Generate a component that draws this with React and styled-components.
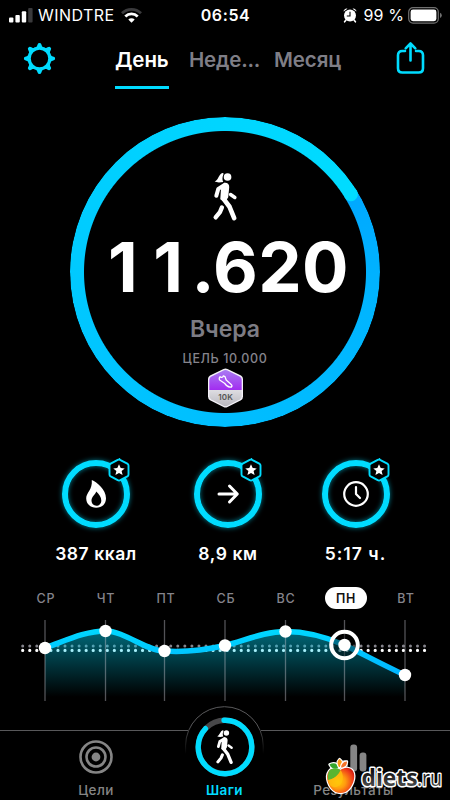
import React from "react";
import styled, { createGlobalStyle } from "styled-components";

const GlobalStyle = createGlobalStyle`
  * { box-sizing: border-box; }
  body {
    margin: 0;
    background: #000;
    overflow: hidden;
  }
  svg { display: block; overflow: visible; }
`;

const Screen = styled.div`
  display: flex;
  flex-direction: column;
  width: 450px;
  height: 800px;
  background: #000;
  color: #fff;
  font-family: Inter, "Liberation Sans", sans-serif;
  white-space: nowrap;
  overflow: hidden;
`;

const StatusBar = styled.div`
  display: grid;
  grid-template-columns: 1fr auto 1fr;
  align-items: center;
  height: 30px;
  padding: 0 8px 0 9px;
`;

const StatusSide = styled.div`
  display: flex;
  align-items: center;
  justify-content: ${({ $end }) => ($end ? "flex-end" : "flex-start")};
  height: 29px;
`;

const StatusText = styled.span`
  font-size: 16px;
  line-height: 29px;
  font-weight: ${({ $bold }) => ($bold ? 600 : 400)};
  letter-spacing: ${({ $track }) => $track || 0}px;
  margin: ${({ $margin }) => $margin || 0};
`;

const Header = styled.div`
  display: flex;
  align-items: flex-start;
  height: 70px;
  padding: 12px 25px 0 23px;
`;

const Tabs = styled.div`
  display: flex;
  flex: 1;
  padding-left: 59px;
  gap: 20px;
`;

const Tab = styled.div`
  width: ${({ $width }) => $width}px;
  height: 47px;
  font-size: 20.5px;
  line-height: 36px;
  font-weight: 600;
  letter-spacing: ${({ $track }) => $track}px;
  color: ${({ $active }) => ($active ? "#fff" : "#7f7e86")};
  border-bottom: 3px solid ${({ $active }) => ($active ? "#00dcff" : "transparent")};
`;

const Dial = styled.div`
  display: grid;
  place-items: start center;
  width: 310px;
  height: 310px;
  margin: 17px 0 0 70px;
  flex: none;
  > * { grid-area: 1 / 1; }
`;

const DialRing = styled.div`
  width: 310px;
  height: 310px;
  border-radius: 50%;
  background: conic-gradient(from 58.3deg, #00a8ff 0deg, #00b4ff 40deg, #00beff 120deg, #00c8ff 200deg, #00d4ff 290deg, #00dcff 360deg);
  mask: radial-gradient(circle, transparent 140.5px, #000 141.5px);
`;

const DialCap = styled.svg`
  z-index: 1;
`;

const DialContent = styled.div`
  display: flex;
  flex-direction: column;
  align-items: center;
  padding-top: 55px;
`;

const Steps = styled.div`
  margin-top: 4px;
  height: 84px;
  padding-left: 7px;
  font-size: 69px;
  line-height: 84px;
  font-weight: 700;
  letter-spacing: 0.4px;
`;

const Digit = styled.span`
  letter-spacing: ${({ $track }) => $track}px;
`;

const When = styled.div`
  height: 30px;
  margin-top: 5px;
  font-size: 23px;
  line-height: 30px;
  font-weight: 600;
  color: #7d7c84;
`;

const Goal = styled.div`
  height: 18px;
  margin: 6px 0 0;
  font-size: 12.5px;
  line-height: 18px;
  font-weight: 500;
  letter-spacing: 0.6px;
  color: #85848c;
`;

const Stats = styled.div`
  display: grid;
  grid-template-columns: 132px 132px 123px;
  margin-top: 33px;
  padding-left: 30px;
  height: 114px;
`;

const Stat = styled.div`
  display: flex;
  flex-direction: column;
  align-items: center;
`;

const StatRing = styled.div`
  position: relative;
  display: flex;
  align-items: center;
  justify-content: center;
  width: 68px;
  height: 68px;
  border: 6px solid #00dcff;
  border-radius: 50%;
  box-shadow: 0 0 5px rgba(0, 220, 255, 0.55), inset 0 0 5px rgba(0, 220, 255, 0.55);
`;

const StarBadge = styled.div`
  position: absolute;
  top: -8px;
  right: -6px;
`;

const StatValue = styled.div`
  margin-top: 14px;
  font-size: 17.5px;
  line-height: 24px;
  font-weight: 600;
  letter-spacing: ${({ $track }) => $track}px;
`;

const Days = styled.div`
  display: grid;
  grid-template-columns: repeat(7, 60px);
  justify-items: center;
  align-items: center;
  padding-left: 16px;
  margin-top: 13px;
  height: 22px;
`;

const Day = styled.div`
  display: flex;
  align-items: center;
  justify-content: center;
  width: 42px;
  height: 22px;
  border-radius: 11px;
  font-size: 12.5px;
  font-weight: ${({ $active }) => ($active ? 600 : 500)};
  letter-spacing: 0.8px;
  color: ${({ $active }) => ($active ? "#111" : "#85848c")};
  background: ${({ $active }) => ($active ? "#fff" : "transparent")};
`;

const ChartWrap = styled.div`
  height: 97px;
  flex: none;
`;

const TabBar = styled.div`
  position: relative;
  display: grid;
  grid-template-columns: 192px 65px 193px;
  height: 94px;
  flex: none;
`;

const Notch = styled.div`
  position: absolute;
  top: 0;
  left: 0;
`;

const TabItem = styled.div`
  display: flex;
  flex-direction: column;
  align-items: center;
  justify-content: flex-end;
  z-index: 1;
  padding-bottom: 1px;
  color: ${({ $active }) => ($active ? "#00dcff" : "#858585")};
  font-size: 13.5px;
  line-height: 18px;
  font-weight: ${({ $active }) => ($active ? 600 : 500)};
  letter-spacing: ${({ $track }) => $track || 0}px;
`;

const TabIcon = styled.div`
  margin-bottom: ${({ $gap }) => $gap}px;
`;

const Watermark = styled.div`
  position: absolute;
  left: 325px;
  top: 51px;
  z-index: 2;
`;

const Walker = ({ height = 49 }) => (
  <svg width={height / 2} height={height} viewBox="0 0 74 148" fill="none" stroke="#fff" strokeLinecap="round" strokeLinejoin="round">
    <circle cx="44" cy="15" r="11.5" fill="#fff" stroke="none" />
    <path d="M29 3C34 3 31 9 29 15C28 22 29 26 31 30C21 32 11 32 5 29C17 24 17 6 29 3Z" fill="#fff" stroke="none" />
    <path d="M33 33C43 31 50 37 49 46L46 76L36 92L22 82L24 52Z" fill="#fff" stroke="none" />
    <path d="M35 39L16 51L10 72" strokeWidth="12" />
    <path d="M53 68L66 77" strokeWidth="10.5" />
    <path d="M32 81L50 105L64 139" strokeWidth="14" />
    <path d="M27 107L21 121L8 137" strokeWidth="13" />
  </svg>
);

const Gear = () => (
  <svg width="33" height="33" viewBox="-16.5 -16.5 33 33">
    <circle r="10.3" fill="none" stroke="#00dcff" strokeWidth="3.2" />
    {[0, 45, 90, 135, 180, 225, 270, 315].map((a) => (
      <path
        key={a}
        d="M-4.6 -10.8C-2.4 -11.4 -2.4 -13 -1.8 -14.3Q-1.5 -15.6 0 -15.6Q1.5 -15.6 1.8 -14.3C2.4 -13 2.4 -11.4 4.6 -10.8Z"
        fill="#00dcff"
        transform={`rotate(${a})`}
      />
    ))}
  </svg>
);

const Share = () => (
  <svg width="29" height="33" viewBox="0 0 29 33" fill="none" stroke="#00dcff" strokeWidth="2.6" strokeLinecap="round" strokeLinejoin="round">
    <path d="M9 9H6.3Q2 9 2 13.3V26.2Q2 30.5 6.3 30.5H22.7Q27 30.5 27 26.2V13.3Q27 9 22.7 9H20" />
    <path d="M14.5 18.5V1.8M9.7 6.3L14.5 1.5L19.3 6.3" />
  </svg>
);

const Star = () => (
  <StarBadge>
    <svg width="22" height="24" viewBox="-11 -12 22 24">
      <path d="M0 -10.6L8.3 -6.4Q9.5 -5.7 9.5 -4.4V4.4Q9.5 5.7 8.3 6.4L1.3 10.2Q0 10.8 -1.3 10.2L-8.3 6.4Q-9.5 5.7 -9.5 4.4V-4.4Q-9.5 -5.7 -8.3 -6.4L-1.3 -10.2Q0 -10.8 1.3 -10.2Z" fill="#000" stroke="#00dcff" strokeWidth="1.9" />
      <path d="M0 -5.8L1.7 -1.9L5.7 -1.6L2.6 1.1L3.6 5.1L0 2.9L-3.6 5.1L-2.6 1.1L-5.7 -1.6L-1.7 -1.9Z" fill="#fff" />
    </svg>
  </StarBadge>
);

const Flame = () => (
  <svg width="20" height="28" viewBox="0 0 20 28">
    <path fillRule="evenodd" fill="#fff" d="M5.8 0C11 2.2 20 9.5 20 18.2C20 24 16 27.7 10.2 27.7C4.3 27.7 0.2 24 0.2 18.3C0.2 12.5 6.6 10 5.8 0ZM10.2 11.5C9.3 15 5.5 16.5 5.5 20.6C5.5 23.7 7.6 25.8 10.4 25.8C13.2 25.8 15.3 23.7 15.3 20.5C15.3 17 13 14 10.2 11.5Z" />
  </svg>
);

const Arrow = () => (
  <svg width="22" height="20" viewBox="0 0 22 20" fill="none" stroke="#fff" strokeWidth="3" strokeLinecap="round" strokeLinejoin="round">
    <path d="M2 10H20M12.5 2L20.3 10L12.5 18" />
  </svg>
);

const Clock = () => (
  <svg width="26" height="26" viewBox="0 0 26 26" fill="none" stroke="#fff" strokeWidth="2.2" strokeLinecap="round" strokeLinejoin="round">
    <circle cx="13" cy="13" r="11.8" />
    <path d="M13 6V13L17 17" />
  </svg>
);

const GoalBadge = () => (
  <svg width="37" height="40" viewBox="0 0 37 40">
    <defs>
      <linearGradient id="purple" x1="0" y1="0" x2="0" y2="1">
        <stop offset="0" stopColor="#a97cf2" />
        <stop offset="1" stopColor="#a22cf0" />
      </linearGradient>
      <linearGradient id="silver" x1="0" y1="0" x2="0" y2="1">
        <stop offset="0" stopColor="#dedde2" />
        <stop offset="1" stopColor="#b9b8bf" />
      </linearGradient>
    </defs>
    <path d="M16.5 1Q18.5 0 20.5 1L34 7.5Q36 8.6 36 11V28.5Q36 31 34 32.2L20.5 39Q18.5 40 16.5 39L3 32.2Q1 31 1 28.5V11Q1 8.6 3 7.5Z" fill="#f4f2f8" />
    <path d="M2.3 22H34.7V28Q34.7 30.2 33 31.2L20 38Q18.5 38.7 17 38L4 31.2Q2.3 30.2 2.3 28Z" fill="url(#silver)" />
    <path d="M2.3 22V12Q2.3 9.6 4 8.7L17 2.3Q18.5 1.6 20 2.3L33 8.7Q34.7 9.6 34.7 12V22Z" fill="url(#purple)" />
    <path d="M13 8.7C14 10 16 9.4 16.3 7.8L18 8.6L19.2 12L24.2 16.5C25.6 17.8 25 19.3 23 19.2C20.5 19 18.8 17.3 17.5 15.2L13 12.3C12 11.5 12 9.3 13 8.7Z" fill="none" stroke="#fff" strokeWidth="1.3" strokeLinejoin="round" />
    <text x="18.6" y="31.8" textAnchor="middle" fontFamily="Inter, sans-serif" fontSize="8" fontWeight="600" fill="#555" textLength="14.5">10K</text>
  </svg>
);

const points = [[45, 39], [105.5, 22], [164.5, 42], [225, 36.5], [285.5, 22.5], [344.5, 36], [405, 66]];

const curve =
  "M45 39C65 32 85 22 105.5 22C125 22 146 42 164.5 42C185 43.5 205 41 225 36.5C246 31 265 22.5 285.5 22.5C306 22.5 326 28 344.5 36C365 46 385 57 405 66";

const Chart = () => (
  <svg width="450" height="97" viewBox="0 0 450 97">
    <defs>
      <linearGradient id="area" x1="0" y1="22" x2="0" y2="88" gradientUnits="userSpaceOnUse">
        <stop offset="0" stopColor="#00cfef" stopOpacity="0.5" />
        <stop offset="1" stopColor="#00cfef" stopOpacity="0" />
      </linearGradient>
      <linearGradient id="line" x1="0" y1="20" x2="0" y2="66" gradientUnits="userSpaceOnUse">
        <stop offset="0" stopColor="#00d8ff" />
        <stop offset="1" stopColor="#00b4ff" />
      </linearGradient>
    </defs>
    <path d="M22.7 36.9H425" stroke="#85848c" strokeWidth="3" strokeLinecap="round" strokeDasharray="0 7.05" />
    <path d="M22.7 41.4H425" stroke="#fff" strokeWidth="3.2" strokeLinecap="round" strokeDasharray="0 7.05" />
    <path d={`${curve}V91H45Z`} fill="url(#area)" />
    {points.map(([x]) => (
      <path key={x} d={`M${x} 11V92`} stroke="#c5c5d0" strokeOpacity="0.42" strokeWidth="1.3" />
    ))}
    <path d={curve} fill="none" stroke="url(#line)" strokeWidth="5.5" />
    <circle cx="344.5" cy="36" r="13.3" fill="rgba(0,0,0,0.45)" stroke="#fff" strokeWidth="4" />
    {points.map(([x, y]) => (
      <circle key={x} cx={x} cy={y} r="6.2" fill="#fff" />
    ))}
  </svg>
);

const stats = [
  { value: "387 ккал", icon: <Flame />, track: 0.55 },
  { value: "8,9 км", icon: <Arrow />, track: 0.6 },
  { value: "5:17 ч.", icon: <Clock />, track: 1 },
];

const days = ["СР", "ЧТ", "ПТ", "СБ", "ВС", "ПН", "ВТ"];

export default function App() {
  return (
    <Screen>
      <GlobalStyle />
      <StatusBar>
        <StatusSide>
          <svg width="24" height="15" viewBox="0 0 24 15" fill="#fff">
            <rect x="0" y="9.5" width="4.4" height="5" rx="1" />
            <rect x="6.4" y="7" width="4.4" height="7.5" rx="1" />
            <rect x="12.8" y="3.3" width="4.4" height="11.2" rx="1" />
            <rect x="19.2" y="0" width="4.4" height="14.5" rx="1" fill="#3a3a3c" />
          </svg>
          <StatusText $margin="0 6px 0 5px" $track={0.45}>WINDTRE</StatusText>
          <svg width="21" height="15" viewBox="0 0 21 15" fill="none" strokeWidth="2.8">
            <path d="M1 5.2A13.5 13.5 0 0 1 20 5.2" stroke="#3a3a3c" />
            <path d="M4.3 8.5A8.8 8.8 0 0 1 16.7 8.5" stroke="#fff" />
            <path d="M10.5 14.7L7.3 11.5A4.6 4.6 0 0 1 13.7 11.5Z" fill="#fff" />
          </svg>
        </StatusSide>
        <StatusText $bold $track={0.6}>06:54</StatusText>
        <StatusSide $end>
          <svg width="14" height="15" viewBox="0 0 14 15">
            <path d="M0.5 3.5A3 3 0 0 1 4.5 0.8ZM13.5 3.5A3 3 0 0 0 9.5 0.8Z" fill="#fff" />
            <circle cx="7" cy="7.5" r="6" fill="#fff" />
            <path d="M3 12L1.6 13.8M11 12L12.4 13.8" stroke="#fff" strokeWidth="1.6" strokeLinecap="round" />
            <path d="M7 3.8V8H3.8" fill="none" stroke="#000" strokeWidth="1.1" />
          </svg>
          <StatusText $margin="0 4px 0 7px" $track={0.1}>99 %</StatusText>
          <svg width="34" height="17" viewBox="0 0 34 17">
            <rect x="0.7" y="0.7" width="29.6" height="15.4" rx="4.3" fill="none" stroke="#707070" strokeWidth="1.2" />
            <rect x="2.6" y="2.6" width="25.8" height="11.6" rx="2.4" fill="#fff" />
            <path d="M32 5.8Q33.8 6.6 33.8 8.4Q33.8 10.2 32 11Z" fill="#707070" />
          </svg>
        </StatusSide>
      </StatusBar>

      <Header>
        <Gear />
        <Tabs>
          <Tab $active $width={54} $track={-0.1}>День</Tab>
          <Tab $width={65} $track={-0.2}>Неде...</Tab>
          <Tab $width={70} $track={-0.1}>Месяц</Tab>
        </Tabs>
        <Share />
      </Header>

      <Dial>
        <DialRing />
        <DialCap width="310" height="310" viewBox="-155 -155 310 310">
          <circle cx="0" cy="-148" r="7" fill="#00dcff" transform="rotate(58.3)" />
        </DialCap>
        <DialContent>
          <Walker />
          <Steps>
            <Digit $track={15.5}>1</Digit>
            <Digit $track={8.5}>1</Digit>.620
          </Steps>
          <When>Вчера</When>
          <Goal>ЦЕЛЬ 10.000</Goal>
          <GoalBadge />
        </DialContent>
      </Dial>

      <Stats>
        {stats.map(({ value, icon, track }) => (
          <Stat key={value}>
            <StatRing>
              {icon}
              <Star />
            </StatRing>
            <StatValue $track={track}>{value}</StatValue>
          </Stat>
        ))}
      </Stats>

      <Days>
        {days.map((day) => (
          <Day key={day} $active={day === "ПН"}>{day}</Day>
        ))}
      </Days>
      <ChartWrap>
        <Chart />
      </ChartWrap>

      <TabBar>
        <Notch>
          <svg width="450" height="60" viewBox="0 0 450 60">
            <defs>
              <linearGradient id="fade" x1="0" y1="0" x2="0" y2="48" gradientUnits="userSpaceOnUse">
                <stop offset="0.4" stopColor="#58585a" />
                <stop offset="1" stopColor="#58585a" stopOpacity="0" />
              </linearGradient>
            </defs>
            <path d="M0 24.5H188M261 24.5H450" stroke="#58585a" />
            <path d="M185.6 48V39.5A38.8 38.8 0 0 1 263.2 39.5V48" fill="#000" stroke="url(#fade)" />
          </svg>
        </Notch>
        <TabItem $track={0.4}>
          <TabIcon $gap={7}>
            <svg width="34" height="34" viewBox="-17 -17 34 34" fill="none" stroke="#858585" strokeWidth="2.6">
              <circle r="15.5" />
              <circle r="9.5" />
              <circle r="4.4" fill="#858585" stroke="none" />
            </svg>
          </TabIcon>
          Цели
        </TabItem>
        <TabItem $active $track={0.4}>
          <TabIcon $gap={4}>
            <svg width="60" height="60" viewBox="-30 -30 60 60" fill="none">
              <circle r="26.8" stroke="#48484a" strokeWidth="5.4" />
              <circle r="26.8" stroke="#00dcff" strokeWidth="5.4" strokeLinecap="round" pathLength="360" strokeDasharray="315 360" transform="rotate(-92)" />
              <g transform="translate(-9 -17.5)">
                <Walker height={35} />
              </g>
            </svg>
          </TabIcon>
          Шаги
        </TabItem>
        <TabItem $track={0.4}>
          <TabIcon $gap={9}>
            <svg width="26" height="28" viewBox="0 0 26 28" fill="#858585">
              <rect x="0" y="16" width="6.8" height="11.5" rx="3" />
              <rect x="9.3" y="0.5" width="6.8" height="27" rx="3" />
              <rect x="18.6" y="8.5" width="6.8" height="19" rx="3" />
            </svg>
          </TabIcon>
          Результаты
        </TabItem>
        <Watermark>
          <svg width="120" height="43" viewBox="0 0 120 43">
            <defs>
              <radialGradient id="apple" cx="0.4" cy="0.55" r="0.7">
                <stop offset="0" stopColor="#ffd400" />
                <stop offset="0.4" stopColor="#ff9a10" />
                <stop offset="0.8" stopColor="#ee3a1a" />
                <stop offset="1" stopColor="#c81808" />
              </radialGradient>
              <linearGradient id="ink" x1="0" y1="0" x2="0" y2="1">
                <stop offset="0.3" stopColor="#111" />
                <stop offset="1" stopColor="#666" />
              </linearGradient>
            </defs>
            <g stroke="#fff" strokeWidth="2.4" strokeLinejoin="round" paintOrder="stroke">
              <path d="M15.5 13C19 10 25 10 28 14C31.5 20 27.5 31 20.5 35Q15.5 37 10.5 35C3.5 31 -0.5 20 4 14C7 10 12 11 15.5 13Z" fill="url(#apple)" />
              <path d="M14 11C10 12.5 6 11.5 4.5 7.5C8 5 13 6 14 11Z" fill="#35a52c" />
              <path d="M14 10C11.5 6 12.5 4 14.5 2C18 4.5 18 7 15 10Z" fill="#ff9a10" />
              <path d="M16 10.5C16.5 6.5 19 4.5 22 4.5C22 8 20 10.5 16 10.5Z" fill="#f4732a" />
            </g>
            <path d="M15.5 13C12 11 7 10 4 14Q2 18 3 23C9 22 14 18 15.5 13Z" fill="#58b531" />
            <path d="M3 23C9 22 14 18 15.5 13C18 16 19 22 16 27C13 31 7 31 5 28Z" fill="#ffc20e" fillOpacity="0.75" />
            <g stroke="#fff" strokeWidth="3" strokeLinejoin="round" paintOrder="stroke" fill="url(#ink)" fontFamily="'Open Sans', sans-serif" fontSize="22.5">
              <text x="36.5" y="29" fontWeight="700" textLength="56" lengthAdjust="spacingAndGlyphs">diets</text>
              <text x="92" y="29" fontWeight="500" textLength="25" lengthAdjust="spacingAndGlyphs">.ru</text>
            </g>
          </svg>
        </Watermark>
      </TabBar>
    </Screen>
  );
}
